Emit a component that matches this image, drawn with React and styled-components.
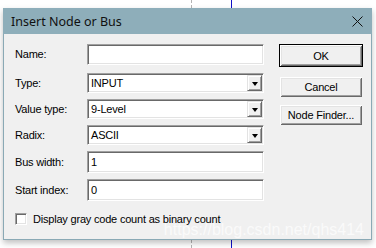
import React from "react";
import styled, { createGlobalStyle } from "styled-components";

const Global = createGlobalStyle`
    html, body {
        margin: 0;
        padding: 0;
        background: #ffffff;
    }
    body {
        width: 376px;
        height: 248px;
        overflow: hidden;
        font-family: "Liberation Sans", Arial, sans-serif;
    }
`;

const Desktop = styled.div`
    position: relative;
    width: 376px;
    height: 248px;
    padding: 8px 4px 0 3px;
    box-sizing: border-box;
    background: #ffffff;

    .dash {
        position: absolute;
        left: 191px;
        top: 0;
        height: 248px;
        border-left: 1px dashed #b4b4b4;
    }
    .wire {
        position: absolute;
        left: 231px;
        top: 0;
        height: 248px;
        width: 1px;
        background: #1010c8;
    }
`;

const Window = styled.div`
    position: relative;
    width: 369px;
    height: 232px;
    box-sizing: border-box;
    border: 1px solid #8aa9b5;
    border-top: none;
    background: #f0f0f0;
    box-shadow: 0 3px 6px rgba(0, 0, 0, 0.25);
    display: flex;
    flex-direction: column;
`;

const TitleBar = styled.div`
    height: 26px;
    margin: 0 -1px;
    background: #8eaeba;
    display: flex;
    align-items: center;
    justify-content: space-between;
    padding: 0 9px 0 8px;
    font-family: "Noto Sans", "Liberation Sans", sans-serif;
    font-size: 12.5px;
    color: #101010;
`;

const Body = styled.div`
    flex: 1;
    display: flex;
    padding: 10px 9px 0 11px;
    gap: 15px;
    font-size: 11px;
    letter-spacing: -0.2px;
    color: #000;
`;

const Form = styled.div`
    display: grid;
    grid-template-columns: 72px 177px;
    grid-auto-rows: min-content;
    align-items: center;
`;

const Label = styled.div`
    height: ${(p) => p.h}px;
    margin-top: ${(p) => p.mt}px;
    line-height: ${(p) => p.h}px;
    white-space: nowrap;
`;

const Sunken = styled.div`
    position: relative;
    height: ${(p) => p.h}px;
    margin-top: ${(p) => p.mt}px;
    box-sizing: border-box;
    background: #ffffff;
    border-top: 1px solid #a0a0a0;
    border-left: 1px solid #a0a0a0;
    border-right: 1px solid #ffffff;
    border-bottom: 1px solid #ffffff;
    box-shadow: inset 1px 1px 0 #696969, inset -1px -1px 0 #e3e3e3;
    display: flex;
    align-items: center;
    padding-left: 3px;
    line-height: 1;
`;

const DropBtn = styled.div`
    position: absolute;
    right: 1px;
    top: 1px;
    bottom: 1px;
    width: 15px;
    box-sizing: border-box;
    background: #f0f0f0;
    border-top: 1px solid #e3e3e3;
    border-left: 1px solid #e3e3e3;
    border-right: 1px solid #696969;
    border-bottom: 1px solid #696969;
    box-shadow: inset 1px 1px 0 #ffffff, inset -1px -1px 0 #a0a0a0;
    display: flex;
    align-items: center;
    justify-content: center;

    &::after {
        content: "";
        border-left: 3.5px solid transparent;
        border-right: 3.5px solid transparent;
        border-top: 4px solid #000;
        margin-top: 1px;
    }
`;

const CheckRow = styled.div`
    grid-column: 1 / 3;
    margin-top: 12px;
    display: flex;
    align-items: center;
    gap: 6px;
    height: 12px;
`;

const Box = styled.div`
    width: 12px;
    height: 12px;
    box-sizing: border-box;
    background: #fff;
    border-top: 1px solid #a0a0a0;
    border-left: 1px solid #a0a0a0;
    border-right: 1px solid #ffffff;
    border-bottom: 1px solid #ffffff;
    box-shadow: inset 1px 1px 0 #696969, inset -1px -1px 0 #e3e3e3;
`;

const Buttons = styled.div`
    display: flex;
    flex-direction: column;
`;

const Button = styled.div`
    width: 84px;
    height: ${(p) => (p.primary ? 23 : 22)}px;
    margin-top: ${(p) => p.mt}px;
    box-sizing: border-box;
    background: #f0f0f0;
    border: 1px solid ${(p) => (p.primary ? "#000" : "#f0f0f0")};
    box-shadow: inset 1px 1px 0 #ffffff, inset -1px -1px 0 #696969,
        inset 2px 2px 0 #e3e3e3, inset -2px -2px 0 #a0a0a0;
    display: flex;
    align-items: center;
    justify-content: center;
    white-space: nowrap;
`;

const Watermark = styled.div`
    position: absolute;
    right: 7px;
    bottom: 0;
    font-family: "Liberation Sans", Arial, sans-serif;
    font-size: 16px;
    line-height: 18px;
    color: rgba(255, 255, 255, 0.7);
    pointer-events: none;
`;

const CloseIcon = () => (
    <svg width="11" height="11" viewBox="0 0 11 11">
        <path d="M0.5 0.5 L10.5 10.5 M10.5 0.5 L0.5 10.5" stroke="#111" strokeWidth="1" />
    </svg>
);

const rows = [
    { label: "Name:", value: "", h: 21, mt: 0 },
    { label: "Type:", value: "INPUT", h: 20, mt: 8, drop: true },
    { label: "Value type:", value: "9-Level", h: 20, mt: 6, drop: true },
    { label: "Radix:", value: "ASCII", h: 20, mt: 6, drop: true },
    { label: "Bus width:", value: "1", h: 22, mt: 6 },
    { label: "Start index:", value: "0", h: 22, mt: 6 },
];

const App = () => (
    <Desktop>
        <Global />
        <div className="dash" />
        <div className="wire" />
        <Window>
            <TitleBar>
                <span>Insert Node or Bus</span>
                <CloseIcon />
            </TitleBar>
            <Body>
                <Form>
                    {rows.map((r) => (
                        <React.Fragment key={r.label}>
                            <Label h={r.h} mt={r.mt}>{r.label}</Label>
                            <Sunken h={r.h} mt={r.mt}>
                                {r.value}
                                {r.drop && <DropBtn />}
                            </Sunken>
                        </React.Fragment>
                    ))}
                    <CheckRow>
                        <Box />
                        <span>Display gray code count as binary count</span>
                    </CheckRow>
                </Form>
                <Buttons>
                    <Button primary mt={0}>OK</Button>
                    <Button mt={9}>Cancel</Button>
                    <Button mt={6}>Node Finder...</Button>
                </Buttons>
            </Body>
            <Watermark>https://blog.csdn.net/qhs414</Watermark>
        </Window>
    </Desktop>
);

export default App;
